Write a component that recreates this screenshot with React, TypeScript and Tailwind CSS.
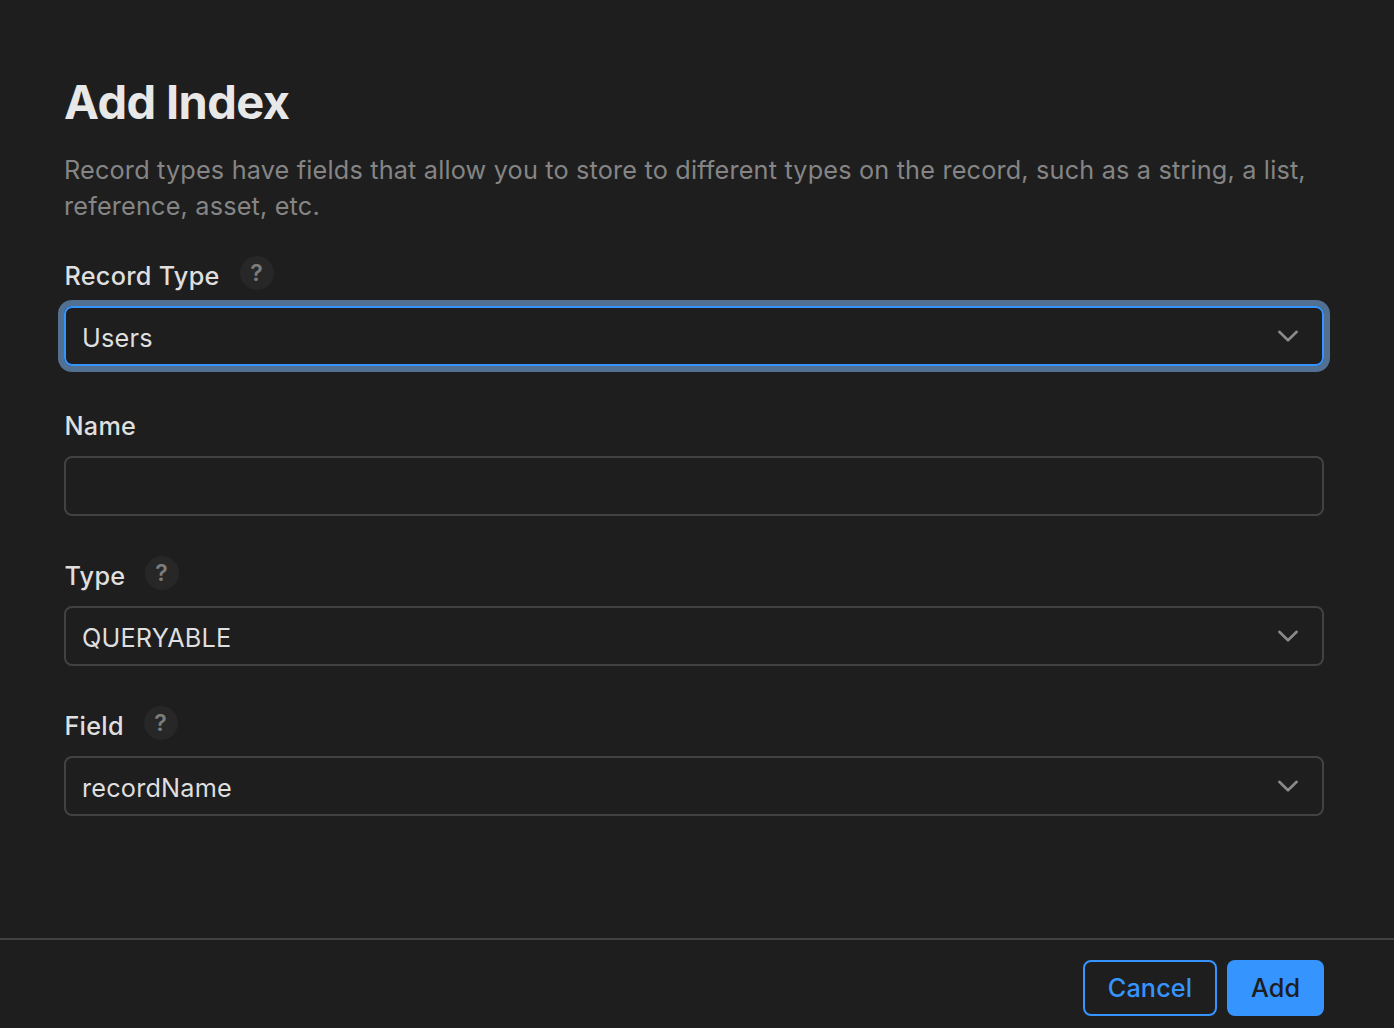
import React from "react";

function Help() {
  return (
    <span className="mt-[6px] flex size-[34px] items-center justify-center rounded-full bg-[#272727] pr-px text-[23px] font-semibold text-[#7c7c7c]">
      ?
    </span>
  );
}

function Chevron() {
  return (
    <svg width="22" height="14" viewBox="0 0 22 14" fill="none" className="mr-[23px]">
      <path d="M2.3 2.8 L11 11.3 L19.7 2.8" stroke="#8a8a8a" strokeWidth="2.6" strokeLinecap="round" strokeLinejoin="round" />
    </svg>
  );
}

type FieldProps = {
  label: string;
  labelWidth: string;
  value?: string;
  help?: boolean;
  focused?: boolean;
};

function Field({ label, labelWidth, value, help, focused }: FieldProps) {
  return (
    <div className="h-[150px]">
      <div className="flex h-[56px] items-start">
        <span
          className={`mt-[10px] pl-[0.4px] text-[25.25px] leading-[32px] font-medium tracking-[0.28px] whitespace-nowrap text-[#dfdfdf] ${labelWidth}`}
        >
          {label}
        </span>
        {help && <Help />}
      </div>
      <div
        className={`flex h-[60px] items-center justify-between rounded-[8px] border-2 pl-[16px] ${
          focused ? "border-[#3694ff] shadow-[0_0_0_6px_#527092]" : "border-[#424242]"
        }`}
      >
        <span className="pt-[4px] text-[25.25px] leading-[32px] tracking-[0.2px] text-[#dfdfdf]">{value}</span>
        {value && <Chevron />}
      </div>
    </div>
  );
}

export default function App() {
  return (
    <main className="flex h-[1028px] w-[1394px] flex-col overflow-hidden bg-[#1e1e1e] font-['Inter',sans-serif]">
      <section className="h-[938px] pt-[73px] pr-[70px] pl-[64px]">
        <h1 className="h-[79px] text-[47px] leading-[58px] font-bold tracking-[-0.6px] text-[#e8e8e8]">Add Index</h1>
        <p className="h-[98px] text-[25.25px] leading-[36px] tracking-[0.175px] whitespace-nowrap text-[#858585]">
          Record types have fields that allow you to store to different types on the record, such as a string, a list,
          <br />
          reference, asset, etc.
        </p>
        <Field label="Record Type" labelWidth="w-[176px]" value="Users" help focused />
        <Field label="Name" labelWidth="w-[176px]" />
        <Field label="Type" labelWidth="w-[81px]" value="QUERYABLE" help />
        <Field label="Field" labelWidth="w-[80px]" value="recordName" help />
      </section>
      <footer className="flex h-[90px] justify-end gap-[10px] border-t-2 border-[#424242] pt-[20px] pr-[70px] text-[25.25px] font-medium tracking-[0.1px]">
        <button className="h-[56px] w-[134px] rounded-[8px] border-2 border-[#3694ff] pt-[2px] text-[#3694ff]">Cancel</button>
        <button className="h-[56px] w-[97px] rounded-[8px] bg-[#3694ff] pt-[2px] text-[#1e1e1e]">Add</button>
      </footer>
    </main>
  );
}
